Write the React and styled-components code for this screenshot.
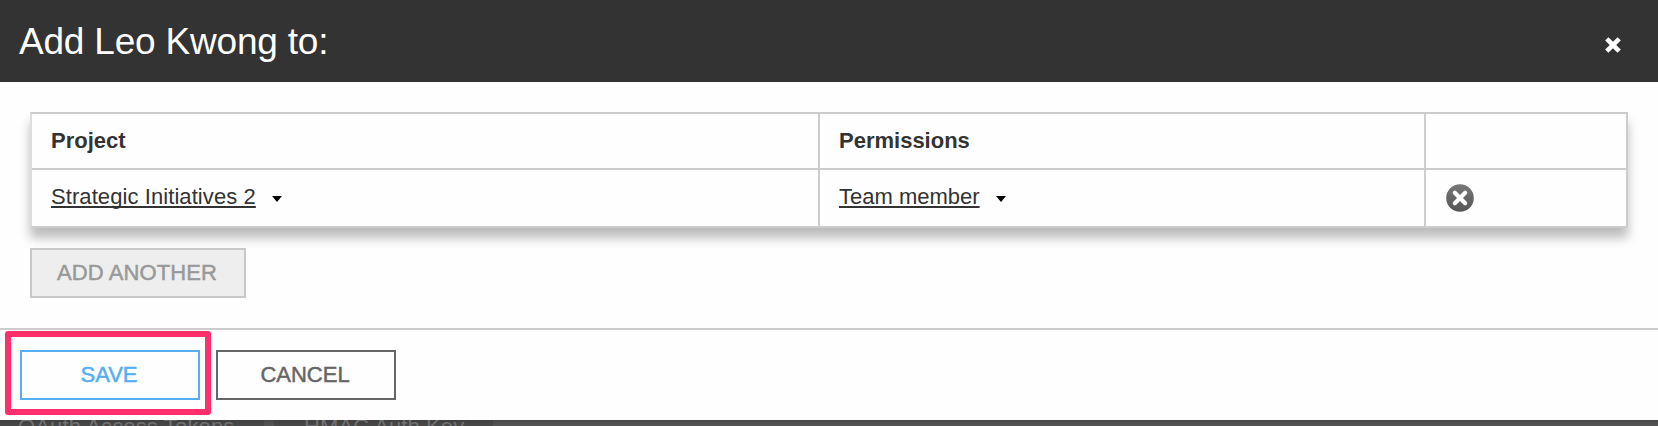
import React from "react";
import styled, { createGlobalStyle } from "styled-components";

const GlobalStyle = createGlobalStyle`
  * { box-sizing: border-box; }
  body {
    margin: 0;
    font-family: "Liberation Sans", Arial, Helvetica, sans-serif;
    font-size: 22px;
    color: #333;
    background: #4f4f4f;
  }
`;

const Page = styled.div`
  height: 426px;
  overflow: hidden;
  display: flex;
  flex-direction: column;
`;

const Dialog = styled.section`
  flex: none;
  height: 420px;
  display: flex;
  flex-direction: column;
  background: #fefefe;
`;

const Header = styled.header`
  height: 82px;
  padding: 0 37px 0 19px;
  display: flex;
  align-items: center;
  justify-content: space-between;
  background: #333;
  color: #fff;
`;

const Title = styled.h1`
  margin: 0;
  padding-top: 2px;
  font-size: 37px;
  font-weight: 400;
  line-height: 80px;
  letter-spacing: -0.2px;
`;

const IconButton = styled.button`
  display: flex;
  margin: ${(p) => p.$margin || "0"};
  padding: 0;
  border: 0;
  background: none;
`;

const Body = styled.div`
  height: 246px;
  padding: 30px 30px 0;
`;

const Grid = styled.div`
  display: grid;
  grid-template-columns: 788px 606px 1fr;
  grid-template-rows: 56px 56px;
  border: 2px solid #ccc;
  border-left-color: #ddd;
  height: 116px;
  box-shadow: 0 10px 10px rgba(0, 0, 0, 0.26);
  background: #fefefe;
`;

const Cell = styled.div`
  display: flex;
  align-items: center;
  padding: ${(p) => (p.$head ? "0 19px 1px" : "0 19px 2px")};
  border-right: ${(p) => (p.$last ? "0" : "2px solid #ccc")};
  border-bottom: ${(p) => (p.$head ? "2px solid #ccc" : "0")};
  font-weight: ${(p) => (p.$head ? 700 : 400)};
`;

const Picker = styled.span`
  display: flex;
  align-items: center;
  gap: 16px;
`;

const PickerText = styled.span`
  line-height: 26px;
  letter-spacing: ${(p) => p.$track || "0"};
  text-decoration: underline;
  text-decoration-thickness: 2px;
  text-underline-offset: 2px;
  text-decoration-skip-ink: none;
`;

const Caret = styled.span`
  margin-top: 4px;
  border: 5px solid transparent;
  border-top: 6px solid #000;
  border-bottom: 0;
`;

const Button = styled.button`
  width: ${(p) => p.$width || "180px"};
  height: 50px;
  padding: 0 2px 0 0;
  border: 2px solid ${(p) => p.$line};
  background: ${(p) => p.$fill || "#fefefe"};
  color: ${(p) => p.$ink};
  font: 22px/46px "Liberation Sans", Arial, sans-serif;
  letter-spacing: ${(p) => p.$track || "0"};
  -webkit-text-stroke: 0.5px currentColor;
`;

const AddRow = styled.div`
  display: flex;
  padding-top: 20px;
`;

const Footer = styled.footer`
  height: 92px;
  border-top: 2px solid #ccc;
  padding: 20px 20px 0;
  display: flex;
  gap: 16px;
`;

const Highlighted = styled.div`
  position: relative;
  height: 50px;
  &::after {
    content: "";
    position: absolute;
    inset: -19px -11px -15px -15px;
    border: 6px solid #ff2e6c;
    border-radius: 3px;
    pointer-events: none;
  }
`;

const Backdrop = styled.div`
  flex: none;
  height: 6px;
  overflow: hidden;
  display: flex;
  gap: 10px;
  background: linear-gradient(#484848, #565656);
`;

const BackTab = styled.div`
  width: ${(p) => p.$width};
  height: 6px;
  padding-left: ${(p) => p.$pad};
  background: linear-gradient(#404040, #484848);
  color: #707070;
  font-size: 22px;
  line-height: 13px;
  letter-spacing: ${(p) => p.$track};
  white-space: nowrap;
`;

const CloseIcon = () => (
  <svg width="16" height="16" viewBox="0 0 16 16">
    <path d="M3.4 3.4 12.6 12.6M12.6 3.4 3.4 12.6" stroke="#fff" strokeWidth="4.6" strokeLinecap="square" />
  </svg>
);

const RemoveIcon = () => (
  <svg width="28" height="28" viewBox="0 0 28 28">
    <defs>
      <linearGradient id="disc" x2="0" y2="1">
        <stop stopColor="#777" />
        <stop offset="1" stopColor="#555" />
      </linearGradient>
    </defs>
    <circle cx="14" cy="14" r="13.8" fill="url(#disc)" />
    <path d="M8.8 8.8 19.2 19.2M19.2 8.8 8.8 19.2" stroke="#fff" strokeWidth="4.2" strokeLinecap="round" />
  </svg>
);

export default function App() {
  return (
    <Page>
      <GlobalStyle />
      <Dialog>
        <Header>
          <Title>Add Leo Kwong to:</Title>
          <IconButton aria-label="Close" $margin="8px 0 0">
            <CloseIcon />
          </IconButton>
        </Header>
        <Body>
          <Grid>
            <Cell $head>Project</Cell>
            <Cell $head>Permissions</Cell>
            <Cell $head $last />
            <Cell>
              <Picker>
                <PickerText $track="0.08px">Strategic Initiatives 2</PickerText>
                <Caret />
              </Picker>
            </Cell>
            <Cell>
              <Picker>
                <PickerText>Team member</PickerText>
                <Caret />
              </Picker>
            </Cell>
            <Cell $last>
              <IconButton aria-label="Remove" $margin="2px 0 0 1px">
                <RemoveIcon />
              </IconButton>
            </Cell>
          </Grid>
          <AddRow>
            <Button $width="216px" $line="#c8c8c8" $fill="#eee" $ink="#999" $track="0.12px">ADD ANOTHER</Button>
          </AddRow>
        </Body>
        <Footer>
          <Highlighted>
            <Button $line="#55aff1" $ink="#55aff1">SAVE</Button>
          </Highlighted>
          <Button $line="#666" $ink="#666">CANCEL</Button>
        </Footer>
      </Dialog>
      <Backdrop>
        <BackTab $width="264px" $pad="18px" $track="0.15px">OAuth Access Tokens</BackTab>
        <BackTab $width="219px" $pad="30px" $track="0.1px">HMAC Auth Key</BackTab>
      </Backdrop>
    </Page>
  );
}
